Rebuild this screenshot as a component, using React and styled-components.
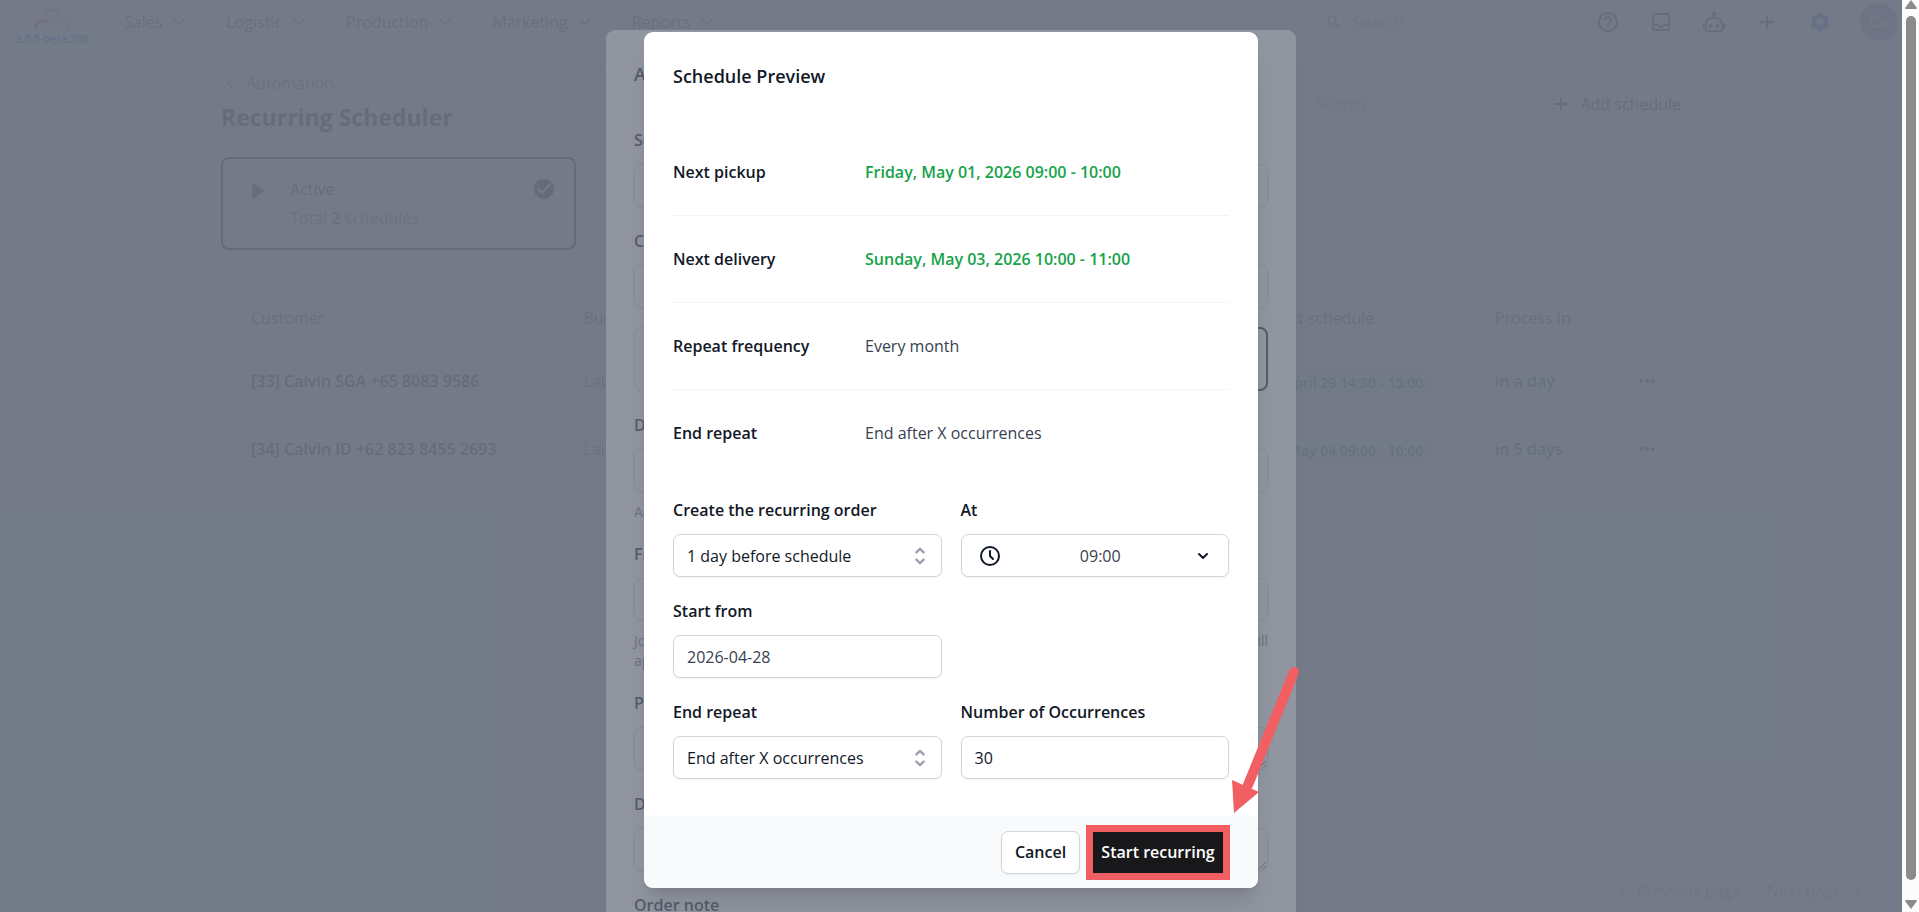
import React from "react";
import styled, { createGlobalStyle, css } from "styled-components";
import { MdHelpOutline, MdOutlineInbox, MdAdd, MdSettings, MdSearch, MdCheckCircle } from "react-icons/md";
import { LuChevronDown, LuChevronLeft, LuChevronRight } from "react-icons/lu";

const Global = createGlobalStyle`
  *, *::before, *::after { box-sizing: border-box; }
  body { margin: 0; overflow: hidden; font: 400 16px/24px "Open Sans", "Noto Sans", sans-serif; color: #111827; background: #fff; }
  h1, h2, p, dl, dd { margin: 0; }
  button, input, select, textarea { font: inherit; color: inherit; margin: 0; }
  button { cursor: pointer; }
  a { color: inherit; text-decoration: none; }
`;

const Window = styled.div`
  display: flex;
  height: 100vh;
`;
const Viewport = styled.div`
  position: relative;
  flex: 1;
  min-width: 0;
  overflow: hidden;
  display: flex;
  flex-direction: column;
`;

/* Scroll bar */
const Track = styled.div`
  width: 17px;
  background: #fcfcfc;
  display: flex;
  flex-direction: column;
  align-items: center;
  justify-content: space-between;
  padding: 0 0 3px;
`;
const Thumb = styled.div`
  flex: 1;
  width: 10px;
  margin: 7px 0 20px;
  border-radius: 5px;
  background: #8b8b8b;
`;
const ScrollArrow = styled.svg`
  width: 12px;
  height: 9px;
  fill: #8b8b8b;
  flex: none;
`;

/* Top bar */
const TopBar = styled.header`
  display: flex;
  align-items: center;
  height: 44px;
  padding: 0 4px 0 9px;
  flex: none;
`;
const Brand = styled.a`
  display: flex;
  flex-direction: column;
  align-items: center;
  align-self: flex-start;
  width: 86px;
  margin: 8px 29px 0 0;
`;
const Version = styled.span`
  width: 100%;
  height: 18px;
  border-radius: 4px;
  background: #eff6ff;
  color: #1d4ed8;
  font-size: 11px;
  line-height: 18px;
  font-weight: 600;
  text-align: center;
`;
const Menu = styled.nav`
  display: flex;
  gap: 38px;
`;
const MenuLink = styled.a`
  display: flex;
  align-items: center;
  gap: 8px;
  font-weight: 500;
  color: #4b5563;
`;
const TopSearch = styled.label`
  display: flex;
  align-items: center;
  gap: 10px;
  margin-left: auto;
  width: 243px;
  color: #4b5563;
`;
const BareInput = styled.input`
  width: 100%;
  border: 0;
  padding: 0;
  background: none;
  outline: none;
  &::placeholder { color: #9ca3af; opacity: 1; }
`;
const Tools = styled.div`
  display: flex;
  align-items: center;
  gap: 29px;
  margin: 0 28px 0 28px;
`;
const IconButton = styled.button`
  display: flex;
  border: 0;
  padding: 0;
  background: none;
  color: ${(p) => (p.$active ? "#2563eb" : "#1f2937")};
`;
const Avatar = styled.button`
  width: 38px;
  height: 38px;
  border: 0;
  padding: 0;
  border-radius: 50%;
  background: #a5a5c0;
  color: #e5e7eb;
  font-weight: 600;
`;

/* Page */
const Main = styled.main`
  flex: 1;
  padding: 27px 206px 0 221px;
`;
const PageHead = styled.div`
  display: flex;
  justify-content: space-between;
  height: 86px;
`;
const BackLink = styled.a`
  display: flex;
  align-items: center;
  gap: 7px;
  font-weight: 500;
  color: #6b7280;
`;
const PageTitle = styled.h1`
  font-size: 23px;
  line-height: 32px;
  font-weight: 700;
  margin-top: 6px;
`;
const HeadTools = styled.div`
  display: flex;
  gap: 10px;
  padding-top: 12px;
`;
const HeadSearch = styled.input`
  width: 225px;
  height: 42px;
  padding: 0 14px;
  border: 1px solid #e5e7eb;
  border-radius: 7px;
  &::placeholder { color: #9ca3af; opacity: 1; }
`;
const AddButton = styled.button`
  display: flex;
  align-items: center;
  gap: 8px;
  height: 42px;
  padding: 0 14px;
  border: 1px solid #e5e7eb;
  border-radius: 7px;
  background: #fff;
  font-weight: 500;
  color: #1f2937;
`;
const Cards = styled.div`
  display: grid;
  grid-template-columns: repeat(4, 1fr);
  gap: 19px;
`;
const StatusCard = styled.div`
  display: flex;
  gap: 24px;
  height: 93px;
  padding: 18px 18px 0 27px;
  border-radius: 8px;
  border: ${(p) => (p.$active ? "2px solid #18181b" : "1px solid #e5e7eb")};
`;
const StatusText = styled.div`
  flex: 1;
  font-weight: 500;
  p { margin-top: 5px; font-weight: 400; color: #6b7280; }
  strong { font-weight: 600; color: #047857; }
`;
const Panel = styled.section`
  margin-top: 28px;
  padding: 10px 29px;
  border: 1px solid #e5e7eb;
  border-radius: 8px;
`;
const Table = styled.table`
  width: 100%;
  border-collapse: collapse;
  table-layout: fixed;
  th, td { padding: 0; text-align: left; font-weight: 600; }
  th { height: 58px; color: #4b5563; font-weight: 500; }
  td { height: 68px; border-top: 1px solid #e5e7eb; }
`;
const Muted = styled.span`
  color: #6b7280;
  font-weight: 400;
`;
const Soon = styled.span`
  color: #047857;
`;
const Pill = styled.span`
  display: block;
  width: 162px;
  margin-top: 4px;
  padding: 0 7px;
  border-radius: 5px;
  background: #f0fdf4;
  color: #047857;
  font-size: 14px;
  text-align: right;
  white-space: nowrap;
`;
const Pager = styled.nav`
  display: flex;
  justify-content: flex-end;
  height: 42px;
  padding-right: 23px;
  flex: none;
`;
const PageButton = styled.button`
  display: flex;
  align-items: center;
  gap: 6px;
  padding: 0 12px;
  border: 1px solid #d1d5db;
  border-radius: ${(p) => (p.$end ? "0 7px 0 0" : "7px 0 0 0")};
  margin-left: -1px;
  background: #fff;
  color: #9ca3af;
  font-weight: 500;
`;

/* Dialogs */
const Backdrop = styled.div`
  position: absolute;
  inset: 0;
  display: flex;
  justify-content: center;
  align-items: flex-start;
  padding-top: ${(p) => p.$top}px;
  background: rgba(107, 114, 128, 0.75);
  overflow: hidden;
`;
const dialogFrame = css`
  flex: none;
  background: #fff;
  border-radius: 9px;
  box-shadow: 0 20px 25px -5px rgba(0, 0, 0, 0.1), 0 8px 10px -6px rgba(0, 0, 0, 0.1);
`;
const FormDialog = styled.div`
  ${dialogFrame}
  width: min(690px, 100%);
  padding: 32px 28px;
`;
const DialogTitle = styled.h2`
  font-size: 18px;
  line-height: 24px;
  font-weight: 600;
`;
const Stack = styled.div`
  display: flex;
  flex-direction: column;
  margin-top: ${(p) => p.$gap}px;
`;
const control = css`
  width: 100%;
  height: 43px;
  padding: 0 13px;
  border: 1px solid #d1d5db;
  border-radius: 7px;
  background: #fff;
  box-shadow: 0 1px 2px rgba(0, 0, 0, 0.05);
  outline: none;
`;
const Input = styled.input`
  ${control}
  color: ${(p) => (p.$muted ? "#374151" : "#111827")};
`;
const Area = styled.textarea`
  ${control}
  display: block;
  resize: vertical;
`;
const Label = styled.label`
  font-weight: 600;
  line-height: 24px;
  margin-bottom: 12px;
`;
const Options = styled.div`
  display: grid;
  grid-template-columns: 1fr 1fr;
  gap: 19px;
  margin-top: 19px;
`;
const Option = styled.div`
  height: 64px;
  border-radius: 8px;
  border: ${(p) => (p.$active ? "2px solid #18181b" : "1px solid #d1d5db")};
`;
const Hint = styled.p`
  display: flex;
  justify-content: space-between;
  font-size: 14px;
  line-height: 20px;
  color: #6b7280;
`;

const PreviewDialog = styled.div`
  ${dialogFrame}
  position: relative;
  width: min(614px, 100%);
`;
const PreviewBody = styled.div`
  padding: 32px 29px 37px;
`;
const Details = styled.dl`
  margin-top: 40px;
`;
const Detail = styled.div`
  display: flex;
  align-items: center;
  height: 87px;
  & + & { border-top: 1px solid #f3f4f6; }
  dt { width: 192px; font-weight: 600; }
  dd { color: #374151; }
`;
const When = styled.dd`
  && { color: #16a34a; font-weight: 600; }
`;
const Fields = styled.div`
  display: grid;
  grid-template-columns: 1fr 1fr;
  gap: 22px 19px;
  margin-top: 22px;
`;
const Field = styled.div`
  display: flex;
  flex-direction: column;
`;
const Control = styled.div`
  position: relative;
  display: flex;
`;
const Select = styled.select`
  ${control}
  appearance: none;
  text-align-last: ${(p) => (p.$center ? "center" : "left")};
  padding-left: ${(p) => (p.$center ? 24 : 13)}px;
  color: ${(p) => (p.$center ? "#374151" : "#111827")};
`;
const Adornment = styled.span`
  position: absolute;
  top: 0;
  bottom: 0;
  ${(p) => p.$side}: ${(p) => p.$inset}px;
  display: flex;
  align-items: center;
  pointer-events: none;
`;
const Footer = styled.footer`
  display: flex;
  justify-content: flex-end;
  align-items: center;
  gap: 6px;
  height: 72px;
  padding-right: 28px;
  background: #f9fafb;
  border-radius: 0 0 9px 9px;
`;
const CancelButton = styled.button`
  height: 43px;
  width: 79px;
  padding: 0;
  border: 1px solid #d1d5db;
  border-radius: 7px;
  background: #fff;
  box-shadow: 0 1px 2px rgba(0, 0, 0, 0.05);
  font-weight: 600;
`;
const StartButton = styled.button`
  height: 55px;
  width: 144px;
  padding: 0;
  border: 7px solid #f25f62;
  background: #18181b;
  color: #fff;
  font-weight: 600;
  white-space: nowrap;
`;
const Pointer = styled.svg`
  position: absolute;
  right: -44px;
  bottom: 72px;
  width: 76px;
  height: 156px;
  pointer-events: none;
`;

const Cloud = () => (
  <svg width="36" height="22" viewBox="0 0 36 22" fill="none" strokeWidth="3" strokeLinecap="round">
    <path d="M2 21c-1-6 2-8 6-8h7" stroke="#f0708a" />
    <path d="M10 7c2-6 12-7 15 1" stroke="#f5b08a" />
    <path d="M18 8c2 5 4 4 7 3c6-1 10 4 8 9" stroke="#e8c988" />
  </svg>
);
const Robot = () => (
  <svg width="24" height="24" viewBox="0 0 24 24" fill="currentColor">
    <path d="M12 2a2 2 0 0 1 2 2c0 .74-.4 1.39-1 1.73V7h1a7 7 0 0 1 7 7h1a1 1 0 0 1 1 1v3a1 1 0 0 1-1 1h-1v1a2 2 0 0 1-2 2H5a2 2 0 0 1-2-2v-1H2a1 1 0 0 1-1-1v-3a1 1 0 0 1 1-1h1a7 7 0 0 1 7-7h1V5.730c-.6-.34-1-.99-1-1.73a2 2 0 0 1 2-2m-2 7a5 5 0 0 0-5 5v2H3v1h2v3h14v-3h2v-1h-2v-2a5 5 0 0 0-5-5zM8.500 14a2 2 0 1 1 0 4 2 2 0 0 1 0-4m7 0a2 2 0 1 1 0 4 2 2 0 0 1 0-4" />
  </svg>
);
const Dots = () => (
  <svg width="18" height="6" viewBox="0 0 18 6" fill="currentColor">
    <circle cx="3" cy="3" r="2" /><circle cx="9" cy="3" r="2" /><circle cx="15" cy="3" r="2" />
  </svg>
);
const UpDown = () => (
  <svg width="24" height="24" viewBox="0 0 20 20" fill="none" stroke="#9ca3af" strokeWidth="2" strokeLinecap="round" strokeLinejoin="round">
    <path d="M7 7l3-3 3 3M7 13l3 3 3-3" />
  </svg>
);
const Clock = () => (
  <svg width="22" height="22" viewBox="0 0 22 22" fill="none" stroke="#111827" strokeWidth="2" strokeLinecap="round" strokeLinejoin="round">
    <circle cx="11" cy="11" r="9" /><path d="M11 6v5l3 3" />
  </svg>
);

const rows = [
  { name: "[33] Calvin SGA +65 8083 9586", when: "April 29 14:30 - 15:00", due: "in a day" },
  { name: "[34] Calvin ID +62 823 8455 2693", when: "May 04 09:00 - 10:00", due: "in 5 days" },
];

const SelectField = ({ id, label, value }) => (
  <Field>
    <Label htmlFor={id}>{label}</Label>
    <Control>
      <Select id={id} defaultValue={value}><option>{value}</option></Select>
      <Adornment $side="right" $inset={10}><UpDown /></Adornment>
    </Control>
  </Field>
);

function Page() {
  return (
    <>
      <TopBar>
        <Brand href="#"><Cloud /><Version>3.0.0-beta.308</Version></Brand>
        <Menu>
          {["Sales", "Logistic", "Production", "Marketing", "Reports"].map((m) => (
            <MenuLink href="#" key={m}>{m}<LuChevronDown size={18} /></MenuLink>
          ))}
        </Menu>
        <TopSearch>
          <MdSearch size={20} />
          <BareInput placeholder="Search" aria-label="Search" />
        </TopSearch>
        <Tools>
          <IconButton aria-label="Help"><MdHelpOutline size={24} /></IconButton>
          <IconButton aria-label="Inbox"><MdOutlineInbox size={24} /></IconButton>
          <IconButton aria-label="Assistant"><Robot /></IconButton>
          <IconButton aria-label="Create"><MdAdd size={24} /></IconButton>
          <IconButton aria-label="Settings" $active><MdSettings size={24} /></IconButton>
        </Tools>
        <Avatar>Ca</Avatar>
      </TopBar>
      <Main>
        <PageHead>
          <div>
            <BackLink href="#"><LuChevronLeft size={18} />Automation</BackLink>
            <PageTitle>Recurring Scheduler</PageTitle>
          </div>
          <HeadTools>
            <HeadSearch placeholder="Search" aria-label="Search schedules" />
            <AddButton><MdAdd size={22} />Add schedule</AddButton>
          </HeadTools>
        </PageHead>
        <Cards>
          <StatusCard $active>
            <svg width="16" height="28" viewBox="0 0 16 28"><path d="M2 6l13 8-13 8z" fill="#1f2937" /></svg>
            <StatusText>Active<p>Total <strong>2</strong> schedules</p></StatusText>
            <MdCheckCircle size={24} color="#18181b" />
          </StatusCard>
          <StatusCard />
          <StatusCard />
        </Cards>
        <Panel>
          <Table>
            <colgroup>
              <col style={{ width: "23.5%" }} /><col style={{ width: "48.4%" }} /><col style={{ width: "16%" }} /><col />
              <col style={{ width: "2%" }} />
            </colgroup>
            <thead>
              <tr><th>Customer</th><th>Business</th><th>Next schedule</th><th>Process In</th><th /></tr>
            </thead>
            <tbody>
              {rows.map((r) => (
                <tr key={r.name}>
                  <td>{r.name}</td>
                  <td><Muted>Laundry</Muted></td>
                  <td><Pill>{r.when}</Pill></td>
                  <td><Soon>{r.due}</Soon></td>
                  <td><IconButton aria-label="More"><Dots /></IconButton></td>
                </tr>
              ))}
            </tbody>
          </Table>
        </Panel>
      </Main>
      <Pager>
        <PageButton><LuChevronLeft size={18} />Previous page</PageButton>
        <PageButton $end>Next page<LuChevronRight size={18} /></PageButton>
      </Pager>
    </>
  );
}

function ScheduleForm() {
  return (
    <Backdrop $top={30}>
      <FormDialog role="dialog" aria-label="Add schedule">
        <DialogTitle>Add schedule</DialogTitle>
        <Stack $gap={42}><Label htmlFor="service">Service</Label><Input id="service" /></Stack>
        <Stack $gap={22}><Label htmlFor="customer">Customer</Label><Input id="customer" /></Stack>
        <Options><Option /><Option $active /></Options>
        <Stack $gap={22}><Label htmlFor="delivery">Delivery</Label><Input id="delivery" /><Stack $gap={10}><Hint>Address</Hint></Stack></Stack>
        <Stack $gap={20}>
          <Label htmlFor="frequency">Frequency</Label><Input id="frequency" />
          <Stack $gap={10}><Hint><span>Job</span><span>will</span></Hint><Hint>apply</Hint></Stack>
        </Stack>
        <Stack $gap={20}><Label htmlFor="pickup-note">Pickup note</Label><Area id="pickup-note" /></Stack>
        <Stack $gap={22}><Label htmlFor="delivery-note">Delivery note</Label><Area id="delivery-note" /></Stack>
        <Stack $gap={22}><Label htmlFor="order-note">Order note</Label><Area id="order-note" /></Stack>
      </FormDialog>
    </Backdrop>
  );
}

function Preview() {
  return (
    <Backdrop $top={32}>
      <PreviewDialog role="dialog" aria-labelledby="preview-title">
        <PreviewBody>
          <DialogTitle id="preview-title">Schedule Preview</DialogTitle>
          <Details>
            <Detail><dt>Next pickup</dt><When>Friday, May 01, 2026 09:00 - 10:00</When></Detail>
            <Detail><dt>Next delivery</dt><When>Sunday, May 03, 2026 10:00 - 11:00</When></Detail>
            <Detail><dt>Repeat frequency</dt><dd>Every month</dd></Detail>
            <Detail><dt>End repeat</dt><dd>End after X occurrences</dd></Detail>
          </Details>
          <Fields>
            <SelectField id="lead" label="Create the recurring order" value="1 day before schedule" />
            <Field>
              <Label htmlFor="time">At</Label>
              <Control>
                <Select id="time" $center defaultValue="09:00"><option>09:00</option></Select>
                <Adornment $side="left" $inset={18}><Clock /></Adornment>
                <Adornment $side="right" $inset={18}><LuChevronDown size={16} strokeWidth={3} /></Adornment>
              </Control>
            </Field>
            <Field><Label htmlFor="start">Start from</Label><Input id="start" $muted defaultValue="2026-04-28" /></Field>
            <span />
            <SelectField id="end" label="End repeat" value="End after X occurrences" />
            <Field><Label htmlFor="count">Number of Occurrences</Label><Input id="count" inputMode="numeric" defaultValue="30" /></Field>
          </Fields>
        </PreviewBody>
        <Footer>
          <CancelButton>Cancel</CancelButton>
          <StartButton>Start recurring</StartButton>
        </Footer>
        <Pointer viewBox="0 0 76 156">
          <path d="M68 12L22 125" stroke="#f25f62" strokeWidth="10" strokeLinecap="round" />
          <path d="M8 153L6 120L33 132Z" fill="#f25f62" />
        </Pointer>
      </PreviewDialog>
    </Backdrop>
  );
}

export default function App() {
  return (
    <Window>
      <Global />
      <Viewport>
        <Page />
        <ScheduleForm />
        <Preview />
      </Viewport>
      <Track>
        <ScrollArrow viewBox="0 0 12 9"><path d="M6 0l6 8q0 1-1 1H1q-1 0-1-1z" /></ScrollArrow>
        <Thumb />
        <ScrollArrow viewBox="0 0 12 9"><path d="M6 9l6-8q0-1-1-1H1q-1 0-1 1z" /></ScrollArrow>
      </Track>
    </Window>
  );
}
